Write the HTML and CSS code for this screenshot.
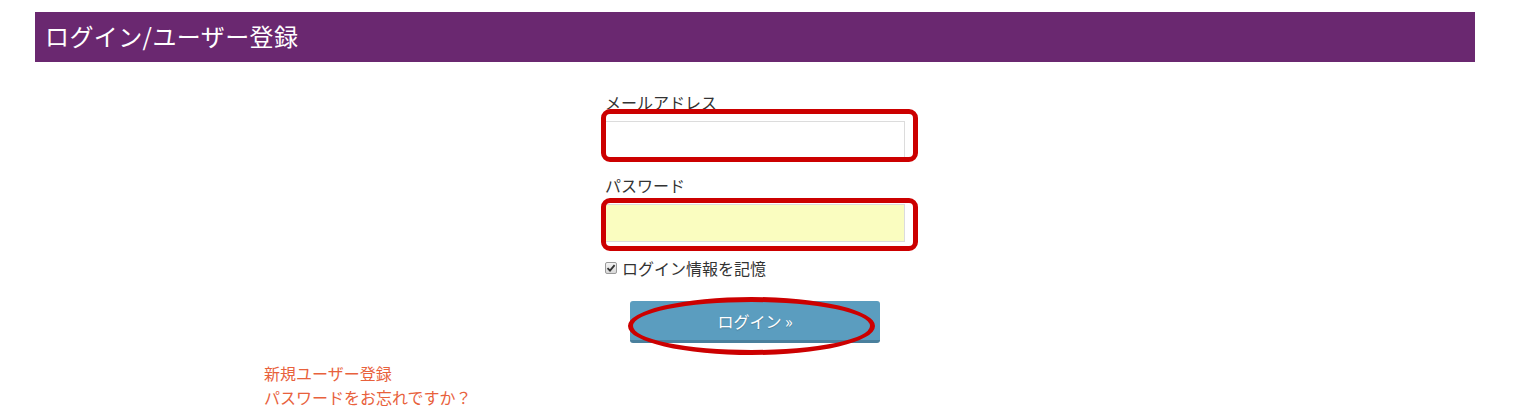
FILE: index.html
```html
<!DOCTYPE html>
<html lang="ja">
  <head>
    <meta charset="UTF-8" />
    <meta name="viewport" content="width=device-width, initial-scale=1.0" />
    <title>ログイン/ユーザー登録</title>
    <link rel="stylesheet" href="styles.css">
  </head>
  <body>
    <div class="wrap">
      <h1 class="page-title">ログイン/ユーザー登録</h1>

      <form class="login-form" action="">
        <label class="field-label" for="email">メールアドレス</label>
        <div class="field">
          <input type="text" id="email" name="email" class="text-input" />
          <span class="mark mark-email"></span>
        </div>

        <label class="field-label" for="password">パスワード</label>
        <div class="field">
          <input type="password" id="password" name="password" class="text-input autofill" />
          <span class="mark mark-pass"></span>
        </div>

        <label class="remember" for="remember">
          <input type="checkbox" id="remember" name="remember" checked />
          <span class="check-box">
            <svg width="10" height="10" viewBox="0 0 10 10">
              <path d="M1.5 5.2 L4 7.6 L8.6 2.2" fill="none" stroke="#333" stroke-width="1.8" />
            </svg>
          </span>
          ログイン情報を記憶
        </label>

        <div class="btn-row">
          <div class="btn-wrap">
            <button type="submit" class="login-btn">ログイン »</button>
            <span class="mark-oval"></span>
          </div>
        </div>
      </form>

      <div class="links">
        <a href="#">新規ユーザー登録</a>
        <a href="#">パスワードをお忘れですか？</a>
      </div>
    </div>
  </body>
</html>
```

FILE: styles.css
```css
* {
  margin: 0;
  padding: 0;
  box-sizing: border-box;
  font-family: "Noto Sans CJK JP", "Noto Sans", sans-serif;
}
body {
  background: #fff;
  color: #333;
}
.wrap {
  width: 1440px;
  margin: 12px 0 0 35px;
}
.page-title {
  height: 50px;
  line-height: 48px;
  padding-left: 10px;
  background-color: #6a2870;
  color: #fff;
  font-size: 24px;
  letter-spacing: 0.4px;
  font-weight: 400;
}
.login-form {
  width: 300px;
  margin: 30px auto 0;
}
.field-label {
  display: block;
  font-size: 16px;
  line-height: 20px;
  margin-bottom: 9px;
}
.field {
  position: relative;
  margin-bottom: 16px;
}
.text-input {
  display: block;
  width: 300px;
  height: 38px;
  border: 1px solid #dcdcdc;
  background: #fff;
  outline: none;
  padding: 0 8px;
  font-size: 15px;
}
.text-input.autofill {
  background-color: #fafdc0;
}
.mark {
  position: absolute;
  width: 317px;
  height: 53px;
  border: 5px solid #cc0000;
  border-radius: 9px;
  pointer-events: none;
}
.mark-email {
  left: -4px;
  top: -12px;
}
.mark-pass {
  left: -4px;
  top: -6px;
}
.remember {
  display: flex;
  align-items: center;
  margin-top: 16px;
  font-size: 16px;
  line-height: 20px;
}
.remember input {
  display: none;
}
.check-box {
  display: flex;
  align-items: center;
  justify-content: center;
  width: 12px;
  height: 12px;
  margin-right: 5px;
  border: 1px solid #9a9a9a;
  border-radius: 2px;
  background: linear-gradient(#f4f4f4, #d8d8d8);
}
.btn-row {
  display: flex;
  justify-content: center;
  margin-top: 23px;
}
.btn-wrap {
  position: relative;
}
.login-btn {
  display: block;
  width: 250px;
  height: 42px;
  background-color: #5b9dbf;
  border: none;
  border-bottom: 3px solid #4a809d;
  border-radius: 3px;
  color: #fff;
  font-size: 16px;
  text-shadow: 0 1px 1px rgba(0, 0, 0, 0.2);
  cursor: pointer;
}
.mark-oval {
  position: absolute;
  left: -2px;
  top: -4px;
  width: 247px;
  height: 58px;
  border: 5px solid #cc0000;
  border-radius: 50%;
  pointer-events: none;
}
.links {
  display: flex;
  flex-direction: column;
  align-items: flex-start;
  padding-left: 229px;
  margin-top: 18px;
}
.links a {
  color: #e8613c;
  text-decoration: none;
  font-size: 16px;
  line-height: 24px;
}
```
